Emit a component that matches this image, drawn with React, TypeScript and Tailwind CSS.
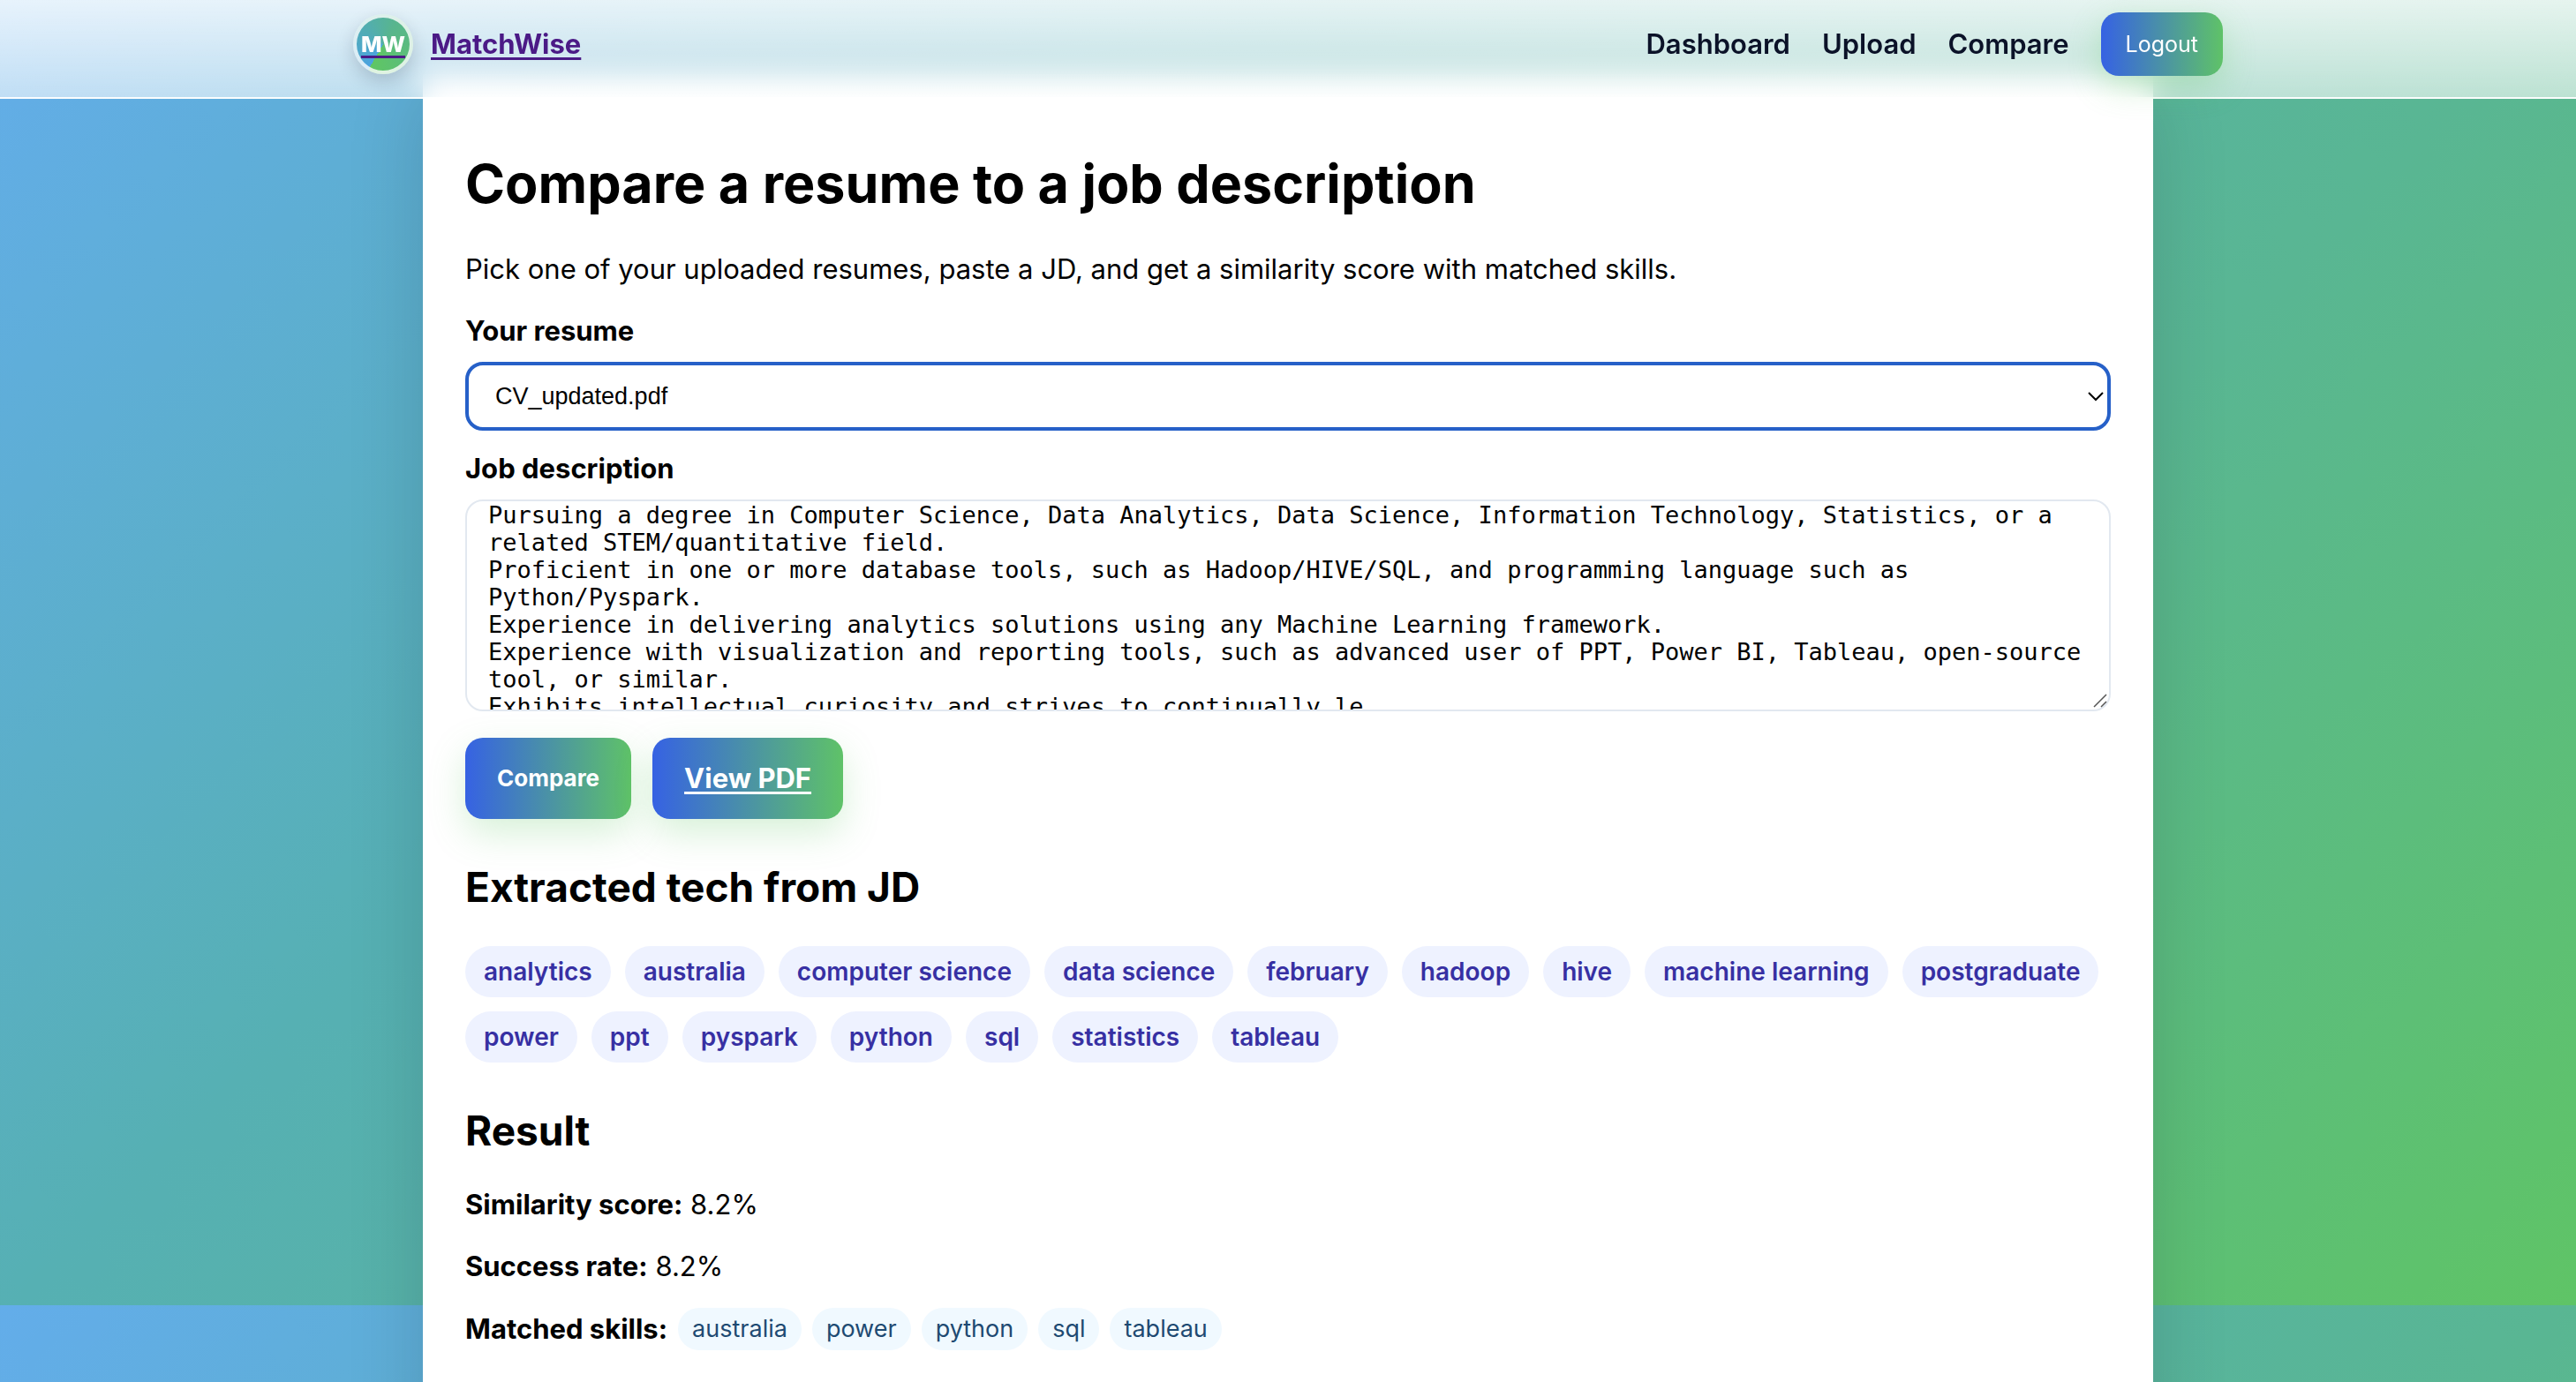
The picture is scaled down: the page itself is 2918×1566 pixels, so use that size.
const tech = [
  'analytics', 'australia', 'computer science', 'data science', 'february', 'hadoop', 'hive', 'machine learning',
  'postgraduate', 'power', 'ppt', 'pyspark', 'python', 'sql', 'statistics', 'tableau',
];
const matched = ['australia', 'power', 'python', 'sql', 'tableau'];
const jobText = `Pursuing a degree in Computer Science, Data Analytics, Data Science, Information Technology, Statistics, or a related STEM/quantitative field.
Proficient in one or more database tools, such as Hadoop/HIVE/SQL, and programming language such as Python/Pyspark.
Experience in delivering analytics solutions using any Machine Learning framework.
Experience with visualization and reporting tools, such as advanced user of PPT, Power BI, Tableau, open-source tool, or similar.
Exhibits intellectual curiosity and strives to continually le`;

export default function App() {
  return (
    <div className="h-screen overflow-hidden bg-[linear-gradient(135deg,#63adea,#56b0b3_34%,#59b693_66%,#5fc466)] bg-[length:100%_1479px] font-[Inter,sans-serif] text-[31px] leading-[38px] text-black">
      <header className="sticky top-0 z-10 h-28 border-b-2 border-white/80 bg-[linear-gradient(to_bottom,rgba(255,255,255,0.85),rgba(255,255,255,0.6))] backdrop-blur-[16px]">
        <div className="mx-auto flex h-[100px] max-w-[2118px] items-center justify-between">
          <a href="#" className="flex items-center gap-5 font-bold text-[#4b1a86] underline decoration-[3px] underline-offset-4">
            <span className="flex size-[68px] items-center justify-center rounded-full border-4 border-white/80 bg-[conic-gradient(from_210deg,#4aa3e0,#58b58e_50%,#5fc663)] bg-origin-border text-[25px] font-extrabold shadow-[0_8px_20px_rgba(15,23,42,0.18)]">
              <span className="text-white">MW</span>
            </span>
            MatchWise
          </a>
          <nav className="flex items-center gap-9 font-semibold text-[#0b1228]">
            <a href="#">Dashboard</a>
            <a href="#">Upload</a>
            <a href="#">Compare</a>
            <button type="button" className="h-[72px] rounded-[20px] bg-[linear-gradient(90deg,#3662e3,#5fc268)] px-7 text-[25px] font-normal text-white shadow-[0_12px_36px_rgba(95,198,99,0.3)]">
              Logout
            </button>
          </nav>
        </div>
      </header>
      <main className="relative mx-auto -mt-7 min-h-screen max-w-[1960px] bg-white px-12 pt-[86px] shadow-[0_20px_80px_rgba(2,6,23,0.15)]">
        <h1 className="text-[61px] font-bold leading-[76px]">Compare a resume to a job description</h1>
        <p className="mt-10">Pick one of your uploaded resumes, paste a JD, and get a similarity score with matched skills.</p>
        <label htmlFor="resume" className="mt-8 block font-bold">Your resume</label>
        <div className="relative mt-4">
          <select id="resume" className="block h-[78px] w-full appearance-none rounded-[20px] border-4 border-[#2660c8] bg-white pl-[30px] font-['Liberation_Sans',sans-serif] text-[27px]">
            <option>CV_updated.pdf</option>
          </select>
          <svg className="pointer-events-none absolute right-2 top-8 h-4 w-[18px]" viewBox="0 0 18 16" fill="none" stroke="#000" strokeWidth="2" aria-hidden="true">
            <path d="M1 3l8 8 8-8" />
          </svg>
        </div>
        <label htmlFor="jd" className="mt-6 block font-bold">Job description</label>
        <div className="relative mt-4">
          <textarea id="jd" defaultValue={jobText} className="block h-60 w-full resize-none overflow-hidden rounded-[20px] border-2 border-[#e2e8f0] bg-white px-6 font-['DejaVu_Sans_Mono',monospace] text-[27px] leading-[31px]" />
          <svg className="pointer-events-none absolute bottom-1 right-1 size-4" viewBox="0 0 16 16" fill="none" stroke="#555" strokeWidth="1.5" aria-hidden="true">
            <path d="M1 15L15 1M9 15l6-6" />
          </svg>
        </div>
        <div className="mt-[30px] flex gap-6">
          <button type="button" className="h-[92px] rounded-[20px] bg-[linear-gradient(90deg,#3662e3,#5fc268)] px-9 text-[26px] font-bold text-white shadow-[0_16px_40px_rgba(95,198,99,0.25)]">Compare</button>
          <a href="#" className="flex h-[92px] items-center rounded-[20px] bg-[linear-gradient(90deg,#3662e3,#5fc268)] px-9 font-bold text-white underline decoration-[3px] underline-offset-4 shadow-[0_16px_40px_rgba(95,198,99,0.25)]">View PDF</a>
        </div>
        <h2 className="mt-12 text-[46px] font-bold leading-[58px]">Extracted tech from JD</h2>
        <ul className="mt-[38px] flex flex-wrap gap-4">
          {tech.map((t) => (
            <li key={t} className="rounded-full bg-[#eef2ff] px-[21px] py-[10px] text-[28px] font-semibold text-[#3730a3]">{t}</li>
          ))}
        </ul>
        <h2 className="mt-12 text-[46px] font-bold leading-[58px]">Result</h2>
        <p className="mt-9"><strong className="font-bold">Similarity score:</strong> 8.2%</p>
        <p className="mt-8"><strong className="font-bold">Success rate:</strong> 8.2%</p>
        <div className="mt-7 flex items-center gap-3">
          <strong className="font-bold">Matched skills:</strong>
          <ul className="flex gap-3">
            {matched.map((t) => (
              <li key={t} className="rounded-full bg-[#f0f9ff] px-4 py-[5px] text-[27px] text-[#1e4a72]">{t}</li>
            ))}
          </ul>
        </div>
      </main>
    </div>
  );
}
